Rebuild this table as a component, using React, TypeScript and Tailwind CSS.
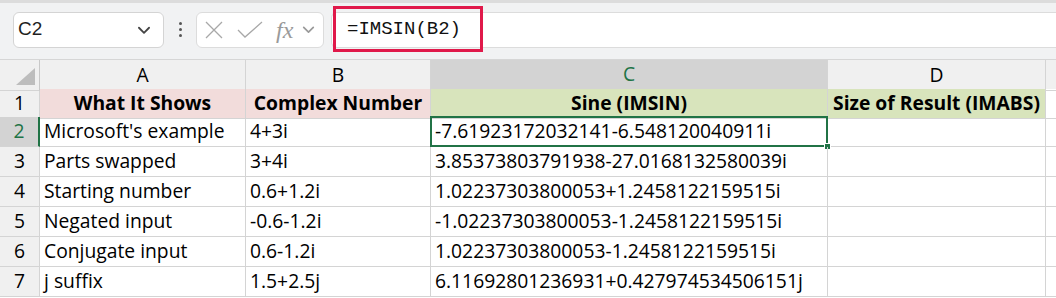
import React from "react";

const cellFont = { fontFamily: "'Open Sans', 'Noto Sans', sans-serif" };

const rows: [string, string, string][] = [
  ["Microsoft's example", "4+3i", "-7.61923172032141-6.548120040911i"],
  ["Parts swapped", "3+4i", "3.85373803791938-27.0168132580039i"],
  ["Starting number", "0.6+1.2i", "1.02237303800053+1.2458122159515i"],
  ["Negated input", "-0.6-1.2i", "-1.02237303800053-1.2458122159515i"],
  ["Conjugate input", "0.6-1.2i", "1.02237303800053-1.2458122159515i"],
  ["j suffix", "1.5+2.5j", "6.11692801236931+0.427974534506151j"],
];

function Chevron({ className }: { className?: string }) {
  return (
    <svg viewBox="0 0 16 16" className={className} fill="none" stroke="currentColor" strokeWidth="1.6" strokeLinecap="round" strokeLinejoin="round">
      <path d="M3.5 6l4.5 4.5L12.5 6" />
    </svg>
  );
}

export default function App() {
  const cols = "grid grid-cols-[40px_206px_185px_397px_218px_1fr]";
  const line = "border-r border-b border-[#d4d4d4]";
  return (
    <div className="w-[1056px] h-[298px] overflow-hidden bg-white select-none">
      {/* toolbar */}
      <div className="relative h-[60px] bg-[#f1f2f3] border-t-[3px] border-[#dcdcdc] border-b border-b-[#d6d6d6]">
        <div className="flex items-center h-full pb-[3px]">
          <div className="ml-[13px] w-[151px] h-[36px] bg-white border border-[#d4d4d4] rounded-[6px] flex items-center justify-between pl-[4px] pr-[10px]">
            <span className="text-[19px] text-[#1f1f1f]" style={{ fontFamily: "'Liberation Sans', Arial, sans-serif" }}>C2</span>
            <Chevron className="w-[18px] h-[18px] text-[#444]" />
          </div>
          <div className="w-[32px] flex flex-col items-center gap-[3px]">
            <span className="w-[3px] h-[3px] rounded-full bg-[#555]" />
            <span className="w-[3px] h-[3px] rounded-full bg-[#555]" />
            <span className="w-[3px] h-[3px] rounded-full bg-[#555]" />
          </div>
          <div className="w-[128px] h-[36px] bg-white border border-[#dcdcdc] rounded-[6px] flex items-center pl-[7px]">
            <svg viewBox="0 0 20 20" className="w-[20px] h-[20px] text-[#a8a8a8]" fill="none" stroke="currentColor" strokeWidth="1.3">
              <path d="M2 2L18 18M18 2L2 18" />
            </svg>
            <svg viewBox="0 0 26 20" className="ml-[13px] w-[26px] h-[20px] text-[#a8a8a8]" fill="none" stroke="currentColor" strokeWidth="1.3">
              <path d="M1 10l7 7L25 2" />
            </svg>
            <span className="ml-[13px] italic text-[24px] leading-none text-[#9a9a9a]" style={{ fontFamily: "'Liberation Serif', 'Times New Roman', serif" }}>fx</span>
            <Chevron className="ml-[7px] w-[17px] h-[17px] text-[#9a9a9a]" />
          </div>
          <div className="ml-[7px] flex-1 h-[36px] bg-white border border-[#dcdcdc] rounded-l-[6px] border-r-0" />
        </div>
        <div className="absolute left-[333px] top-[3px] w-[150px] h-[46px] border-[3px] border-[#e0194a] flex items-center pl-[11px]">
          <span className="text-[19px] text-[#111]" style={{ fontFamily: "'Liberation Mono', 'DejaVu Sans Mono', monospace" }}>=IMSIN(B2)</span>
        </div>
      </div>

      {/* grid */}
      <div className="text-[19.3px] text-black" style={cellFont}>
        {/* column headers */}
        <div className={`${cols} h-[29px] bg-[#f0f0f0]`}>
          <div className={`${line} border-r-[#c8c8c8] relative`}>
            <svg className="absolute right-[4px] bottom-[5px] w-[19px] h-[17px]" viewBox="0 0 19 17">
              <path d="M19 0V17H0Z" fill="#bdbdbd" />
            </svg>
          </div>
          <div className={`${line} flex items-center justify-center`}>A</div>
          <div className={`${line} flex items-center justify-center`}>B</div>
          <div className="border-r border-[#d4d4d4] border-b-2 border-b-[#217346] bg-[#d3d3d3] flex items-center justify-center text-[#217346]">C</div>
          <div className={`${line} flex items-center justify-center`}>D</div>
          <div className="border-b border-[#d4d4d4]" />
        </div>
        {/* header row 1 */}
        <div className={`${cols} h-[28px]`}>
          <div className={`${line} bg-[#f0f0f0] flex items-center justify-center`}>1</div>
          <div className={`${line} bg-[#f2dcdb] font-bold flex items-center justify-center whitespace-nowrap`}>What It Shows</div>
          <div className={`${line} bg-[#f2dcdb] font-bold flex items-center justify-center whitespace-nowrap`}>Complex Number</div>
          <div className={`${line} bg-[#d8e4bc] font-bold flex items-center justify-center whitespace-nowrap`}>Sine (IMSIN)</div>
          <div className={`${line} bg-[#d8e4bc] font-bold flex items-center justify-center whitespace-nowrap`}>Size of Result (IMABS)</div>
          <div className="border-b border-[#d4d4d4]" />
        </div>
        {rows.map((r, i) => {
          const sel = i === 0;
          return (
            <div key={i} className={`${cols} h-[30px]`}>
              <div
                className={
                  sel
                    ? "border-b border-[#d4d4d4] border-r-2 border-r-[#217346] bg-[#d3d3d3] text-[#217346] flex items-center justify-center"
                    : `${line} bg-[#f0f0f0] flex items-center justify-center`
                }
              >
                {i + 2}
              </div>
              <div className={`${line} flex items-center pl-[4px] whitespace-nowrap`}>{r[0]}</div>
              <div className={`${line} flex items-center pl-[4px] whitespace-nowrap`}>{r[1]}</div>
              <div className={`${line} relative flex items-center pl-[4px] whitespace-nowrap`}>
                {r[2]}
                {sel && (
                  <div className="absolute -left-px -top-px -right-px -bottom-px border-2 border-[#217346]">
                    <div className="absolute -right-[5px] -bottom-[5px] w-[7px] h-[7px] bg-[#217346] border border-white" />
                  </div>
                )}
              </div>
              <div className={`${line}`} />
              <div className="border-b border-[#d4d4d4]" />
            </div>
          );
        })}
      </div>
    </div>
  );
}
